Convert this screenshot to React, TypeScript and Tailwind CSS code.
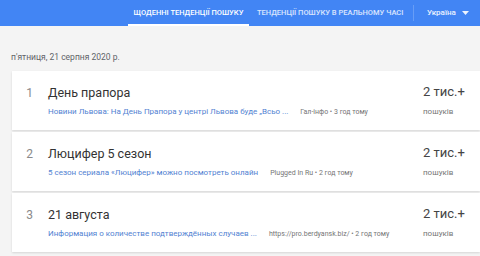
interface Trend {
  rank: number
  title: string
  article: string
  source: string
}

const trends: Trend[] = [
  {
    rank: 1,
    title: 'День прапора',
    article: 'Новини Львова: На День Прапора у центрі Львова буде „Всьо ...',
    source: 'Гал-інфо • 3 год тому',
  },
  {
    rank: 2,
    title: 'Люцифер 5 сезон',
    article: '5 сезон сериала «Люцифер» можно посмотреть онлайн',
    source: 'Plugged In Ru • 2 год тому',
  },
  {
    rank: 3,
    title: '21 августа',
    article: 'Информация о количестве подтверждённых случаев ...',
    source: 'https://pro.berdyansk.biz/ • 2 год тому',
  },
]

function TrendCard({ trend }: { trend: Trend }) {
  return (
    <div className="flex h-[59px] items-start bg-white shadow-[0_1px_2px_rgba(0,0,0,0.12)]">
      <div className="w-[21px] pt-[14px] text-right text-[12px] leading-[16px] text-[#8a8a8a]">{trend.rank}</div>
      <div className="ml-[15px] flex min-w-0 flex-1 flex-col pt-[14px]">
        <div className="text-[12.5px] leading-[16px] text-[#333333]">{trend.title}</div>
        <div className="mt-[5px] flex items-center gap-[12px] whitespace-nowrap leading-[12px]">
          <span className="text-[8px] text-[#5282d2]">{trend.article}</span>
          <span className="text-[7px] text-[#757575]">{trend.source}</span>
        </div>
      </div>
      <div className="w-[57px] shrink-0 pt-[13px]">
        <div className="text-[13px] leading-[16px] text-[#444444]">2 тис.+</div>
        <div className="mt-[6px] text-[8px] leading-[12px] text-[#757575]">пошуків</div>
      </div>
    </div>
  )
}

export default function App() {
  return (
    <div className="h-[256px] w-[480px] overflow-hidden bg-[#f4f4f4] font-['Roboto',sans-serif]">
      <header className="flex h-[26px] items-stretch whitespace-nowrap bg-[#4285f4] pl-[128px] text-[7.5px] font-medium uppercase">
        <div className="flex w-[121px] items-center justify-center border-b-[2px] border-white pt-[2px] text-white">
          Щоденні тенденції пошуку
        </div>
        <div className="ml-[8px] flex w-[140px] items-center text-white/80">Тенденції пошуку в реальному часі</div>
        <div className="my-[5px] ml-[16px] w-px bg-white/20" />
        <div className="ml-[13px] flex items-center gap-[6px] text-[8px] normal-case text-white/90">
          <span>Україна</span>
          <svg width="7" height="4" viewBox="0 0 7 4">
            <path d="M0 0h7L3.5 4z" fill="rgba(255,255,255,0.9)" />
          </svg>
        </div>
      </header>
      <div className="pl-[11px] pt-[24px] text-[8.5px] leading-[14px] text-[#5f6368]">п'ятниця, 21 серпня 2020 р.</div>
      <div className="ml-[12px] mt-[7px] flex flex-col gap-[2px]">
        {trends.map((t) => (
          <TrendCard key={t.rank} trend={t} />
        ))}
      </div>
    </div>
  )
}
